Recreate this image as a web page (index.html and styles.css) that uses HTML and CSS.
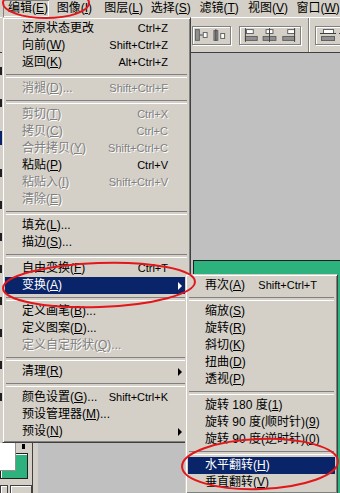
FILE: index.html
```html
<!DOCTYPE html>
<html lang="zh-CN">
<head>
<meta charset="utf-8">
<title>编辑菜单</title>
<link rel="stylesheet" href="styles.css">
</head>
<body>
<div class="app">
  <div class="menubar">
    <span class="mb-item pressed">编辑(<u>E</u>)</span>
    <span class="mb-item">图像(<u>I</u>)</span>
    <span class="mb-item">图层(<u>L</u>)</span>
    <span class="mb-item">选择(<u>S</u>)</span>
    <span class="mb-item">滤镜(<u>T</u>)</span>
    <span class="mb-item">视图(<u>V</u>)</span>
    <span class="mb-item">窗口(<u>W</u>)</span>
  </div>
  <div class="optbar">
    <div class="opt-group g1">
      <svg width="36" height="16" viewBox="0 0 36 16">
        <rect x="1.5" y="2.5" width="4" height="11" fill="#909090" stroke="#606060"/>
        <line x1="6" y1="8" x2="9" y2="8" stroke="#404040"/>
        <rect x="9.5" y="5.5" width="4" height="5" fill="#fff" stroke="#606060"/>
        <rect x="20.5" y="3.5" width="4" height="10" fill="#909090" stroke="#606060"/>
        <line x1="22.5" y1="2" x2="22.5" y2="14" stroke="#404040"/>
        <rect x="27.5" y="6.5" width="4" height="5" fill="#fff" stroke="#606060"/>
      </svg>
    </div>
    <div class="opt-group g2">
      <svg width="59" height="16" viewBox="0 0 59 16">
        <rect x="5.5" y="2.5" width="7" height="4" fill="#fff" stroke="#606060"/>
        <rect x="4.5" y="9.5" width="12" height="4" fill="#909090" stroke="#606060"/>
        <line x1="4.5" y1="1" x2="4.5" y2="15" stroke="#404040"/>
        <rect x="25.5" y="2.5" width="7" height="4" fill="#fff" stroke="#606060"/>
        <rect x="22.5" y="9.5" width="13" height="4" fill="#909090" stroke="#606060"/>
        <line x1="29" y1="1" x2="29" y2="15" stroke="#404040"/>
        <rect x="47.5" y="2.5" width="7" height="4" fill="#fff" stroke="#606060"/>
        <rect x="42.5" y="9.5" width="12" height="4" fill="#909090" stroke="#606060"/>
        <line x1="54.5" y1="1" x2="54.5" y2="15" stroke="#404040"/>
      </svg>
    </div>
    <div class="opt-sep"></div>
    <div class="opt-group g3">
      <svg width="30" height="16" viewBox="0 0 30 16">
        <rect x="6.5" y="2.5" width="10" height="4" fill="#fff" stroke="#606060"/>
        <rect x="4.5" y="9.5" width="13" height="4" fill="#909090" stroke="#606060"/>
        <line x1="3" y1="6.5" x2="19" y2="6.5" stroke="#404040"/>
        <line x1="22" y1="6.5" x2="30" y2="6.5" stroke="#404040"/>
      </svg>
    </div>
  </div>
  <div class="main">
    <div class="toolbox">
      <div class="tools">
        <span class="tool"></span><span class="tool"></span><span class="tool blue"></span>
        <span class="tool"></span><span class="tool"></span><span class="tool"></span>
        <span class="tool"></span><span class="tool"></span><span class="tool"></span>
        <span class="tool"></span><span class="tool"></span>
      </div>
      <div class="swatches">
        <span class="sw-bg"></span>
        <span class="sw-fg"></span>
        <span class="sw-swap"></span>
      </div>
      <div class="modes">
        <span class="mode small"></span><span class="mode wide"></span>
      </div>
    </div>
    <div class="canvas">
      <div class="doc"></div>
    </div>
  </div>
</div>

<div class="menu main-menu">
  <div class="item"><span class="label">还原状态更改</span><span class="key">Ctrl+Z</span><span class="sub"></span></div>
  <div class="item"><span class="label">向前(<u>W</u>)</span><span class="key">Shift+Ctrl+Z</span><span class="sub"></span></div>
  <div class="item"><span class="label">返回(<u>K</u>)</span><span class="key">Alt+Ctrl+Z</span><span class="sub"></span></div>
  <div class="sep"></div>
  <div class="item disabled"><span class="label">消褪(<u>D</u>)...</span><span class="key">Shift+Ctrl+F</span><span class="sub"></span></div>
  <div class="sep"></div>
  <div class="item disabled"><span class="label">剪切(<u>T</u>)</span><span class="key">Ctrl+X</span><span class="sub"></span></div>
  <div class="item disabled"><span class="label">拷贝(<u>C</u>)</span><span class="key">Ctrl+C</span><span class="sub"></span></div>
  <div class="item disabled"><span class="label">合并拷贝(<u>Y</u>)</span><span class="key">Shift+Ctrl+C</span><span class="sub"></span></div>
  <div class="item"><span class="label">粘贴(<u>P</u>)</span><span class="key">Ctrl+V</span><span class="sub"></span></div>
  <div class="item disabled"><span class="label">粘贴入(<u>I</u>)</span><span class="key">Shift+Ctrl+V</span><span class="sub"></span></div>
  <div class="item disabled"><span class="label">清除(<u>E</u>)</span><span class="key"></span><span class="sub"></span></div>
  <div class="sep"></div>
  <div class="item"><span class="label">填充(<u>L</u>)...</span><span class="key"></span><span class="sub"></span></div>
  <div class="item"><span class="label">描边(<u>S</u>)...</span><span class="key"></span><span class="sub"></span></div>
  <div class="sep"></div>
  <div class="item"><span class="label">自由变换(<u>F</u>)</span><span class="key">Ctrl+T</span><span class="sub"></span></div>
  <div class="item active"><span class="label">变换(<u>A</u>)</span><span class="key"></span><span class="sub"><i class="arrow"></i></span></div>
  <div class="sep"></div>
  <div class="item"><span class="label">定义画笔(<u>B</u>)...</span><span class="key"></span><span class="sub"></span></div>
  <div class="item"><span class="label">定义图案(<u>D</u>)...</span><span class="key"></span><span class="sub"></span></div>
  <div class="item disabled"><span class="label">定义自定形状(<u>Q</u>)...</span><span class="key"></span><span class="sub"></span></div>
  <div class="sep"></div>
  <div class="item"><span class="label">清理(<u>R</u>)</span><span class="key"></span><span class="sub"><i class="arrow"></i></span></div>
  <div class="sep"></div>
  <div class="item"><span class="label">颜色设置(<u>G</u>)...</span><span class="key">Shift+Ctrl+K</span><span class="sub"></span></div>
  <div class="item"><span class="label">预设管理器(<u>M</u>)...</span><span class="key"></span><span class="sub"></span></div>
  <div class="item"><span class="label">预设(<u>N</u>)</span><span class="key"></span><span class="sub"><i class="arrow"></i></span></div>
</div>

<div class="menu sub-menu">
  <div class="item"><span class="label">再次(<u>A</u>)</span><span class="key">Shift+Ctrl+T</span><span class="sub"></span></div>
  <div class="sep"></div>
  <div class="item"><span class="label">缩放(<u>S</u>)</span><span class="key"></span><span class="sub"></span></div>
  <div class="item"><span class="label">旋转(<u>R</u>)</span><span class="key"></span><span class="sub"></span></div>
  <div class="item"><span class="label">斜切(<u>K</u>)</span><span class="key"></span><span class="sub"></span></div>
  <div class="item"><span class="label">扭曲(<u>D</u>)</span><span class="key"></span><span class="sub"></span></div>
  <div class="item"><span class="label">透视(<u>P</u>)</span><span class="key"></span><span class="sub"></span></div>
  <div class="sep"></div>
  <div class="item"><span class="label">旋转 180 度(<u>1</u>)</span><span class="key"></span><span class="sub"></span></div>
  <div class="item"><span class="label">旋转 90 度(顺时针)(<u>9</u>)</span><span class="key"></span><span class="sub"></span></div>
  <div class="item"><span class="label">旋转 90 度(逆时针)(<u>0</u>)</span><span class="key"></span><span class="sub"></span></div>
  <div class="sep"></div>
  <div class="item active"><span class="label">水平翻转(<u>H</u>)</span><span class="key"></span><span class="sub"></span></div>
  <div class="item"><span class="label">垂直翻转(<u>V</u>)</span><span class="key"></span><span class="sub"></span></div>
</div>

<svg class="marks" width="340" height="493" viewBox="0 0 340 493">
  <ellipse cx="46" cy="3" rx="43" ry="15" />
  <ellipse cx="99" cy="285" rx="96" ry="22" transform="rotate(-2 99 285)" />
  <ellipse cx="260" cy="464" rx="78" ry="25" transform="rotate(-2 260 464)" />
</svg>
</body>
</html>
```

FILE: styles.css
```css
* {
  box-sizing: border-box;
}

html, body {
  margin: 0;
  padding: 0;
  width: 340px;
  height: 493px;
  overflow: hidden;
}

body {
  position: relative;
  font-family: "Liberation Sans", "Noto Sans CJK SC", sans-serif;
  font-size: 12px;
  color: #000;
  background: #d4d0c8;
}

u {
  text-decoration: underline;
  text-underline-offset: 1px;
}

/* ---------- application background ---------- */
.app {
  display: flex;
  flex-direction: column;
  height: 493px;
}

.menubar {
  display: flex;
  height: 17px;
  padding-left: 3px;
  background: #d4d0c8;
  flex-shrink: 0;
}

.mb-item {
  width: 50px;
  padding-left: 5px;
  height: 17px;
  line-height: 17px;
  white-space: nowrap;
}

.mb-item:nth-child(2) { width: 49px; }
.mb-item:nth-child(3) { width: 48px; }

.mb-item.pressed {
  width: 47px;
  margin-right: 3px;
  box-shadow: inset 1px 1px 0 #808080, inset -1px -1px 0 #fff;
}

.optbar {
  display: flex;
  align-items: center;
  height: 35px;
  padding-left: 192px;
  border-top: 1px solid #fff;
  background: #d4d0c8;
  flex-shrink: 0;
}

.opt-group {
  display: flex;
  align-items: center;
  height: 19px;
  padding: 0 1px;
  border: 1px solid #808080;
  box-shadow: 1px 1px 0 #fff, inset 1px 1px 0 #fff;
}

.g1 { width: 39px; }
.g2 { width: 62px; margin-left: 8px; }
.g3 { width: 40px; margin-left: 5px; }

.opt-sep {
  width: 2px;
  height: 34px;
  margin-left: 7px;
  border-left: 1px solid #808080;
  border-right: 1px solid #fff;
}

.main {
  flex: 1;
  display: flex;
  min-height: 0;
}

.toolbox {
  width: 38px;
  display: flex;
  flex-direction: column;
  background: #d4d0c8;
  border-top: 1px solid #404040;
  box-shadow: inset -5px 0 0 #d4d0c8, inset -6px 0 0 #404040;
  padding-right: 6px;
}

.tools {
  flex: 1;
  display: flex;
  flex-direction: column;
  gap: 24px;
  padding-top: 14px;
}

.tool {
  display: block;
  width: 3px;
  height: 8px;
  background: #202020;
}

.tool.blue {
  height: 14px;
  background: #0a246a;
}

.swatches {
  position: relative;
  height: 42px;
  flex-shrink: 0;
}

.sw-bg {
  position: absolute;
  left: 0;
  top: 10px;
  width: 28px;
  height: 26px;
  background: #2db27e;
  border: 1px solid #202020;
  box-shadow: inset 1px 1px 0 #fff;
}

.sw-fg {
  position: absolute;
  left: 0;
  top: 0;
  width: 16px;
  height: 28px;
  background: #fff;
  border-right: 1px solid #909090;
  border-bottom: 1px solid #909090;
}

.sw-swap {
  position: absolute;
  left: 22px;
  top: 1px;
  width: 3px;
  height: 5px;
  border-left: 1px solid #000;
  border-right: 1px solid #000;
  background: #000;
}

.modes {
  display: flex;
  gap: 2px;
  height: 8px;
  flex-shrink: 0;
}

.mode {
  display: block;
  height: 10px;
  border: 1px solid #404040;
  box-shadow: inset 1px 1px 0 #fff;
}

.mode.small { width: 8px; }
.mode.wide { width: 22px; }

.canvas {
  position: relative;
  flex: 1;
  background: #c0c0c0;
  border-top: 1px solid #404040;
  overflow: hidden;
}

.doc {
  position: absolute;
  left: 155px;
  top: 207px;
  width: 200px;
  height: 300px;
  background: #2db27e;
  border-top: 1px solid #202020;
  border-left: 1px solid #202020;
}

/* ---------- menus ---------- */
.menu {
  position: absolute;
  display: flex;
  flex-direction: column;
  padding: 2px;
  background: #d4d0c8;
  border: 1px solid;
  border-color: #d4d0c8 #404040 #404040 #d4d0c8;
  box-shadow: inset 1px 1px 0 #fff, inset -1px -1px 0 #808080;
}

.main-menu {
  left: 2px;
  top: 17px;
  width: 189px;
}

.sub-menu {
  left: 185px;
  top: 274px;
  width: 153px;
}

.item {
  display: flex;
  align-items: center;
  height: 17px;
  line-height: 17px;
  padding-left: 17px;
  white-space: nowrap;
}

.label {
  flex: 1;
}

.key {
  margin-right: 4px;
  font-size: 11px;
}

.sub-menu .key {
  margin-right: 2px;
}

.sub {
  width: 16px;
  height: 17px;
  display: flex;
  align-items: center;
  justify-content: center;
}

.arrow {
  display: block;
  width: 0;
  height: 0;
  border-left: 4px solid #000;
  border-top: 4px solid transparent;
  border-bottom: 4px solid transparent;
}

.item.active {
  background: #0a246a;
  color: #fff;
}

.item.active .arrow {
  border-left-color: #fff;
}

.item.disabled {
  color: #808080;
  text-shadow: 1px 1px 0 #fff;
}

.sep {
  height: 9px;
  display: flex;
  align-items: center;
  padding: 0 1px;
}

.sep::before {
  content: "";
  display: block;
  flex: 1;
  height: 2px;
  border-top: 1px solid #808080;
  border-bottom: 1px solid #fff;
}

/* ---------- annotations ---------- */
.marks {
  position: absolute;
  left: 0;
  top: 0;
  pointer-events: none;
}

.marks ellipse {
  fill: none;
  stroke: #e3161b;
  stroke-width: 2;
}
```
